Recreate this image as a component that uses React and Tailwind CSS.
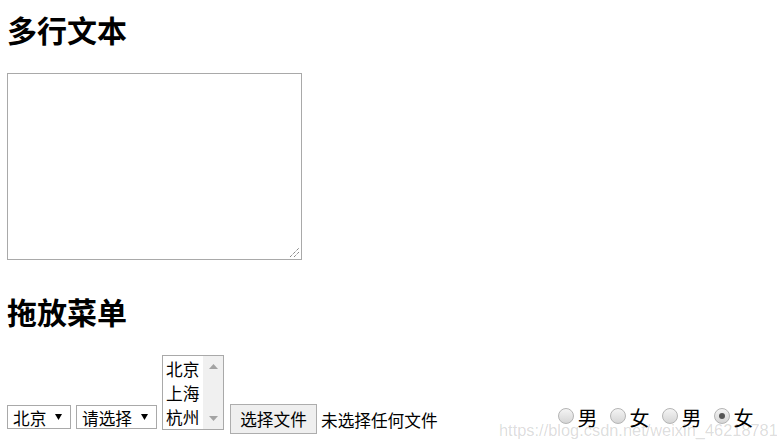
import React from "react";

const cjk = "font-['Microsoft_YaHei','Noto_Sans_CJK_SC',sans-serif]";

function Arrow() {
  return (
    <svg width="7" height="6" viewBox="0 0 7 6" className="shrink-0">
      <path d="M0 0 H7 L3.5 6 Z" fill="#000" />
    </svg>
  );
}

function SelectBox({ label, width }) {
  return (
    <div
      className={`flex h-[24px] items-center border border-[#a9a9a9] bg-white pl-[5px] mb-[5px] ${width}`}
    >
      <span className="mt-[3px] text-[16.67px] leading-[17px]">{label}</span>
      <span className="ml-auto mr-[8px]">
        <Arrow />
      </span>
    </div>
  );
}

function Radio({ label, checked }) {
  return (
    <div className="flex items-end">
      <span className="mb-[4px] flex h-[16px] w-[16px] items-center justify-center rounded-full border border-[#b4b4b4] bg-gradient-to-b from-[#f4f4f4] to-[#d6d6d6]">
        {checked && <span className="h-[6px] w-[6px] rounded-full bg-[#555]" />}
      </span>
      <span className="ml-[4px] text-[20px] leading-[20px]">{label}</span>
    </div>
  );
}

export default function App() {
  return (
    <div className={`relative min-h-screen overflow-hidden bg-white pl-[7px] text-black ${cjk}`}>
      <h2 className="pt-[14px] text-[30px] font-bold leading-[30px]">多行文本</h2>
      <div className="relative mt-[29px] h-[187px] w-[295px] border border-[#a9a9a9] bg-white">
        <svg width="11" height="11" viewBox="0 0 11 11" className="absolute bottom-[1px] right-[1px]">
          <path d="M1 10 L10 1 M5 10 L10 5" stroke="#555" strokeWidth="1" strokeDasharray="1 1" />
        </svg>
      </div>

      <h2 className="mt-[36px] text-[30px] font-bold leading-[30px]">拖放菜单</h2>

      <div className="mt-[29px] flex h-[79px] items-end">
        <SelectBox label="北京" width="w-[64px]" />
        <div className="ml-[5px]">
          <SelectBox label="请选择" width="w-[81px]" />
        </div>

        <div className="mb-[4px] ml-[5px] flex h-[75px] w-[62px] border border-[#a9a9a9] bg-white">
          <div className="flex-1 pl-[3px] pt-[1px] text-[16.67px] leading-[24px]">
            <div>北京</div>
            <div>上海</div>
            <div>杭州</div>
          </div>
          <div className="flex w-[20px] flex-col items-center justify-between bg-[#f0f0f0] py-[8px]">
            <svg width="9" height="5" viewBox="0 0 9 5">
              <path d="M0 5 L4.5 0 L9 5 Z" fill="#a3a3a3" />
            </svg>
            <svg width="9" height="5" viewBox="0 0 9 5">
              <path d="M0 0 L9 0 L4.5 5 Z" fill="#a3a3a3" />
            </svg>
          </div>
        </div>

        <div className="ml-[6px] flex h-[30px] w-[87px] items-center justify-center border border-[#adadad] bg-[#efefef] text-[16.67px] leading-[17px]">
          选择文件
        </div>

        <span className="mb-[5px] ml-[4px] text-[16.67px] leading-[17px]">未选择任何文件</span>

        <div className="mb-[6px] ml-[120px] flex gap-[12px]">
          <Radio label="男" />
          <Radio label="女" />
          <Radio label="男" />
          <Radio label="女" checked />
        </div>
      </div>

      <div className="absolute left-[499px] top-[422px] whitespace-nowrap font-['Liberation_Sans',Arial,sans-serif] text-[16.4px] leading-[17px] text-black/15">
        https://blog.csdn.net/weixin_46218781
      </div>
    </div>
  );
}
